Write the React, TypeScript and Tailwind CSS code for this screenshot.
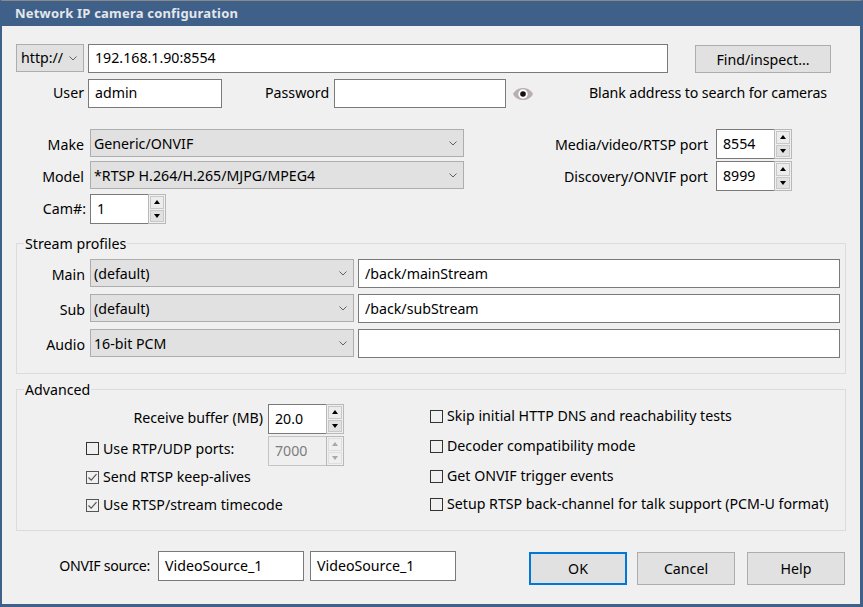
import type { ReactNode } from "react";

function Chevron() {
    return (
        <svg width="8" height="5" viewBox="0 0 8 5" className="shrink-0">
            <path d="M0.5 0.5 L4 4 L7.5 0.5" fill="none" stroke="#606060" strokeWidth="1" />
        </svg>
    );
}

function TextBox({ className = "", children }: { className?: string; children?: ReactNode }) {
    return (
        <div className={`flex items-center bg-white border border-[#7a7a7a] pl-[6px] ${className}`}>{children}</div>
    );
}

function Select({ className = "", children }: { className?: string; children: ReactNode }) {
    return (
        <div className={`flex items-center justify-between bg-[#e1e1e1] border border-[#adadad] pl-[3px] pr-[6px] ${className}`}>
            <span className="pt-px">{children}</span>
            <Chevron />
        </div>
    );
}

function Spin({ value, className = "", disabled = false }: { value: string; className?: string; disabled?: boolean }) {
    const fill = disabled ? "#a8a8a8" : "#000000";
    return (
        <div className={`flex shrink-0 h-[30px] w-[76px] ${className}`}>
            <div className={`flex items-center w-[58px] pl-[6px] pb-px border-y border-l ${disabled ? "bg-[#efefef] border-[#c4c4c4] text-[#7d7d7d]" : "bg-white border-[#7a7a7a]"}`}>
                {value}
            </div>
            <div className="flex flex-col w-[18px] border border-[#b8b8b8] p-px gap-px bg-[#f0f0f0]">
                <div className={`flex-1 flex items-center justify-center border ${disabled ? "bg-[#efefef] border-[#dedede]" : "bg-[#ececec] border-[#c8c8c8]"}`}>
                    <svg width="6" height="4" viewBox="0 0 6 4"><path d="M3 0 L6 4 L0 4 Z" fill={fill} /></svg>
                </div>
                <div className={`flex-1 flex items-center justify-center border ${disabled ? "bg-[#efefef] border-[#dedede]" : "bg-[#e1e1e1] border-[#c8c8c8]"}`}>
                    <svg width="6" height="4" viewBox="0 0 6 4"><path d="M0 0 L6 0 L3 4 Z" fill={fill} /></svg>
                </div>
            </div>
        </div>
    );
}

function Check({ label, checked = false, className = "" }: { label: string; checked?: boolean; className?: string }) {
    return (
        <div className={`flex items-center gap-[4px] whitespace-nowrap ${className}`}>
            <div className={`w-[13px] h-[13px] shrink-0 border ${checked ? "border-[#555555]" : "border-[#333333]"}`}>
                {checked && (
                    <svg width="11" height="11" viewBox="0 0 11 11" className="block">
                        <path d="M1.5 5.5 L4.2 8.2 L9.5 2.2" fill="none" stroke="#555555" strokeWidth="1.2" />
                    </svg>
                )}
            </div>
            <span>{label}</span>
        </div>
    );
}

function Group({ title, className = "", children }: { title: string; className?: string; children: ReactNode }) {
    return (
        <fieldset className={`w-[830px] border border-[#dcdcdc] ${className}`}>
            <legend className="ml-[7px] px-px leading-[14px]">
                <span className="relative top-px">{title}</span>
            </legend>
            {children}
        </fieldset>
    );
}

function StreamRow({ label, option, path, className = "" }: { label: string; option: string; path?: string; className?: string }) {
    return (
        <div className={`flex items-start h-[29px] ${className}`}>
            <div className="flex items-center justify-end w-[68px] h-[29px] pt-[2px]">{label}</div>
            <Select className="w-[264px] h-[28px] ml-[5px]">{option}</Select>
            <TextBox className="w-[482px] h-[29px] ml-[4px]">{path}</TextBox>
        </div>
    );
}

function ActionButton({ label, className = "border border-[#adadad]" }: { label: string; className?: string }) {
    return (
        <div className={`flex items-center justify-center bg-[#e1e1e1] h-[33px] w-[98px] ${className}`}>
            {label}
        </div>
    );
}

export default function App() {
    return (
        <div
            className="flex flex-col w-[863px] h-[607px] overflow-hidden bg-[#f0f0f0] text-[14.2px] text-black border-t border-t-[#8a8a8a] border-l-2 border-r-[3px] border-b-[3px] border-[#3f6089]"
            style={{ fontFamily: '"Noto Sans", "Open Sans", sans-serif' }}
        >
            <div className="flex items-center h-[25px] shrink-0 -ml-[2px] -mr-[3px] pl-[15px] bg-[#3f6089] text-[#e3e7ec] text-[13px] font-bold tracking-[0.2px]">
                Network IP camera configuration
            </div>

            <div className="flex flex-col pl-[14px]">
                {/* address */}
                <div className="flex items-start mt-[18px] h-[29px]">
                    <div className="flex items-center justify-between w-[68px] h-[28px] bg-[#e1e1e1] border border-[#adadad] pl-[4px] pr-[6px]">
                        <span>http://</span>
                        <Chevron />
                    </div>
                    <TextBox className="w-[580px] h-[29px] ml-[4px] pb-px">192.168.1.90:8554</TextBox>
                    <div className="flex items-center justify-center w-[136px] h-[28px] mt-px ml-[27px] pt-px bg-[#e1e1e1] border border-[#adadad]">
                        Find/inspect...
                    </div>
                </div>

                <div className="flex items-center mt-[6px] h-[29px]">
                    <div className="w-[68px] text-right pb-[2px]">User</div>
                    <TextBox className="w-[134px] h-[29px] ml-[4px] pb-px">admin</TextBox>
                    <div className="ml-[43px] w-[61px] whitespace-nowrap pb-[2px]">Password</div>
                    <TextBox className="w-[172px] h-[29px] ml-[8px]" />
                    <svg width="20" height="14" viewBox="0 0 20 14" className="shrink-0 ml-[7px] mt-px">
                        <path d="M0 7 C4 -1 16 -1 20 7 C16 15 4 15 0 7 Z" fill="#b9aeb3" />
                        <circle cx="10" cy="7" r="4.7" fill="#ffffff" />
                        <circle cx="10" cy="7" r="2.8" fill="#111111" />
                    </svg>
                    <div className="ml-[56px] whitespace-nowrap pb-[2px] tracking-[-0.1px]">Blank address to search for cameras</div>
                </div>

                {/* make / model / ports */}
                <div className="flex mt-[21px]">
                    <div className="flex flex-col">
                        <div className="flex items-center h-[28px]">
                            <div className="w-[68px] text-right pt-[3px]">Make</div>
                            <Select className="w-[374px] h-[28px] ml-[6px]">Generic/ONVIF</Select>
                        </div>
                        <div className="flex items-center h-[28px] mt-[4px]">
                            <div className="w-[68px] text-right pt-[3px]">Model</div>
                            <Select className="w-[374px] h-[28px] ml-[6px]">*RTSP H.264/H.265/MJPG/MPEG4</Select>
                        </div>
                        <div className="flex items-center h-[30px] mt-[5px]">
                            <div className="w-[70px] text-right">Cam#:</div>
                            <Spin value="1" className="ml-[4px]" />
                        </div>
                    </div>
                    <div className="flex flex-col gap-[2px]">
                        <div className="flex items-center justify-end w-[328px]">
                            <span className="mr-[8px] pt-px">Media/video/RTSP port</span>
                            <Spin value="8554" />
                        </div>
                        <div className="flex items-center justify-end w-[328px]">
                            <span className="mr-[8px] pt-px">Discovery/ONVIF port</span>
                            <Spin value="8999" />
                        </div>
                    </div>
                </div>

                {/* stream profiles */}
                <Group title="Stream profiles" className="mt-[12px] h-[138px]">
                    <StreamRow label="Main" option="(default)" path="/back/mainStream" className="mt-[9px]" />
                    <StreamRow label="Sub" option="(default)" path="/back/subStream" className="mt-[6px]" />
                    <StreamRow label="Audio" option="16-bit PCM" className="mt-[6px]" />
                </Group>

                {/* advanced */}
                <Group title="Advanced" className="mt-[8px] h-[149px]">
                    <div className="flex">
                        <div className="flex flex-col w-[413px] pl-[69px] mt-[8px]">
                            <div className="flex items-center justify-end w-[258px]">
                                <span className="mr-[5px] -mt-[3px]">Receive buffer (MB)</span>
                                <Spin value="20.0" />
                            </div>
                            <div className="flex items-center justify-between w-[258px] mt-[2px]">
                                <Check label="Use RTP/UDP ports:" className="-mt-[5px]" />
                                <Spin value="7000" disabled />
                            </div>
                            <Check label="Send RTSP keep-alives" checked className="h-[28px] -mt-[3px]" />
                            <Check label="Use RTSP/stream timecode" checked className="h-[28px]" />
                        </div>
                        <div className="flex flex-col mt-[8px]">
                            <Check label="Skip initial HTTP DNS and reachability tests" className="h-[30px] -mt-[3px]" />
                            <Check label="Decoder compatibility mode" className="h-[30px]" />
                            <Check label="Get ONVIF trigger events" className="h-[30px]" />
                            <Check label="Setup RTSP back-channel for talk support (PCM-U format)" className="h-[28px] -mt-[1px]" />
                        </div>
                    </div>
                </Group>

                {/* footer */}
                <div className="flex items-start mt-[20px]">
                    <div className="flex items-center justify-end w-[134px] h-[30px] pb-px tracking-[-0.3px]">ONVIF source:</div>
                    <TextBox className="w-[146px] h-[30px] ml-[8px] pb-px">VideoSource_1</TextBox>
                    <TextBox className="w-[146px] h-[30px] ml-[6px] pb-px">VideoSource_1</TextBox>
                    <ActionButton label="OK" className="ml-[73px] mt-px border-2 border-[#0078d7]" />
                    <ActionButton label="Cancel" className="ml-[10px] mt-px border border-[#adadad]" />
                    <ActionButton label="Help" className="ml-[12px] mt-px border border-[#adadad]" />
                </div>
            </div>
        </div>
    );
}
